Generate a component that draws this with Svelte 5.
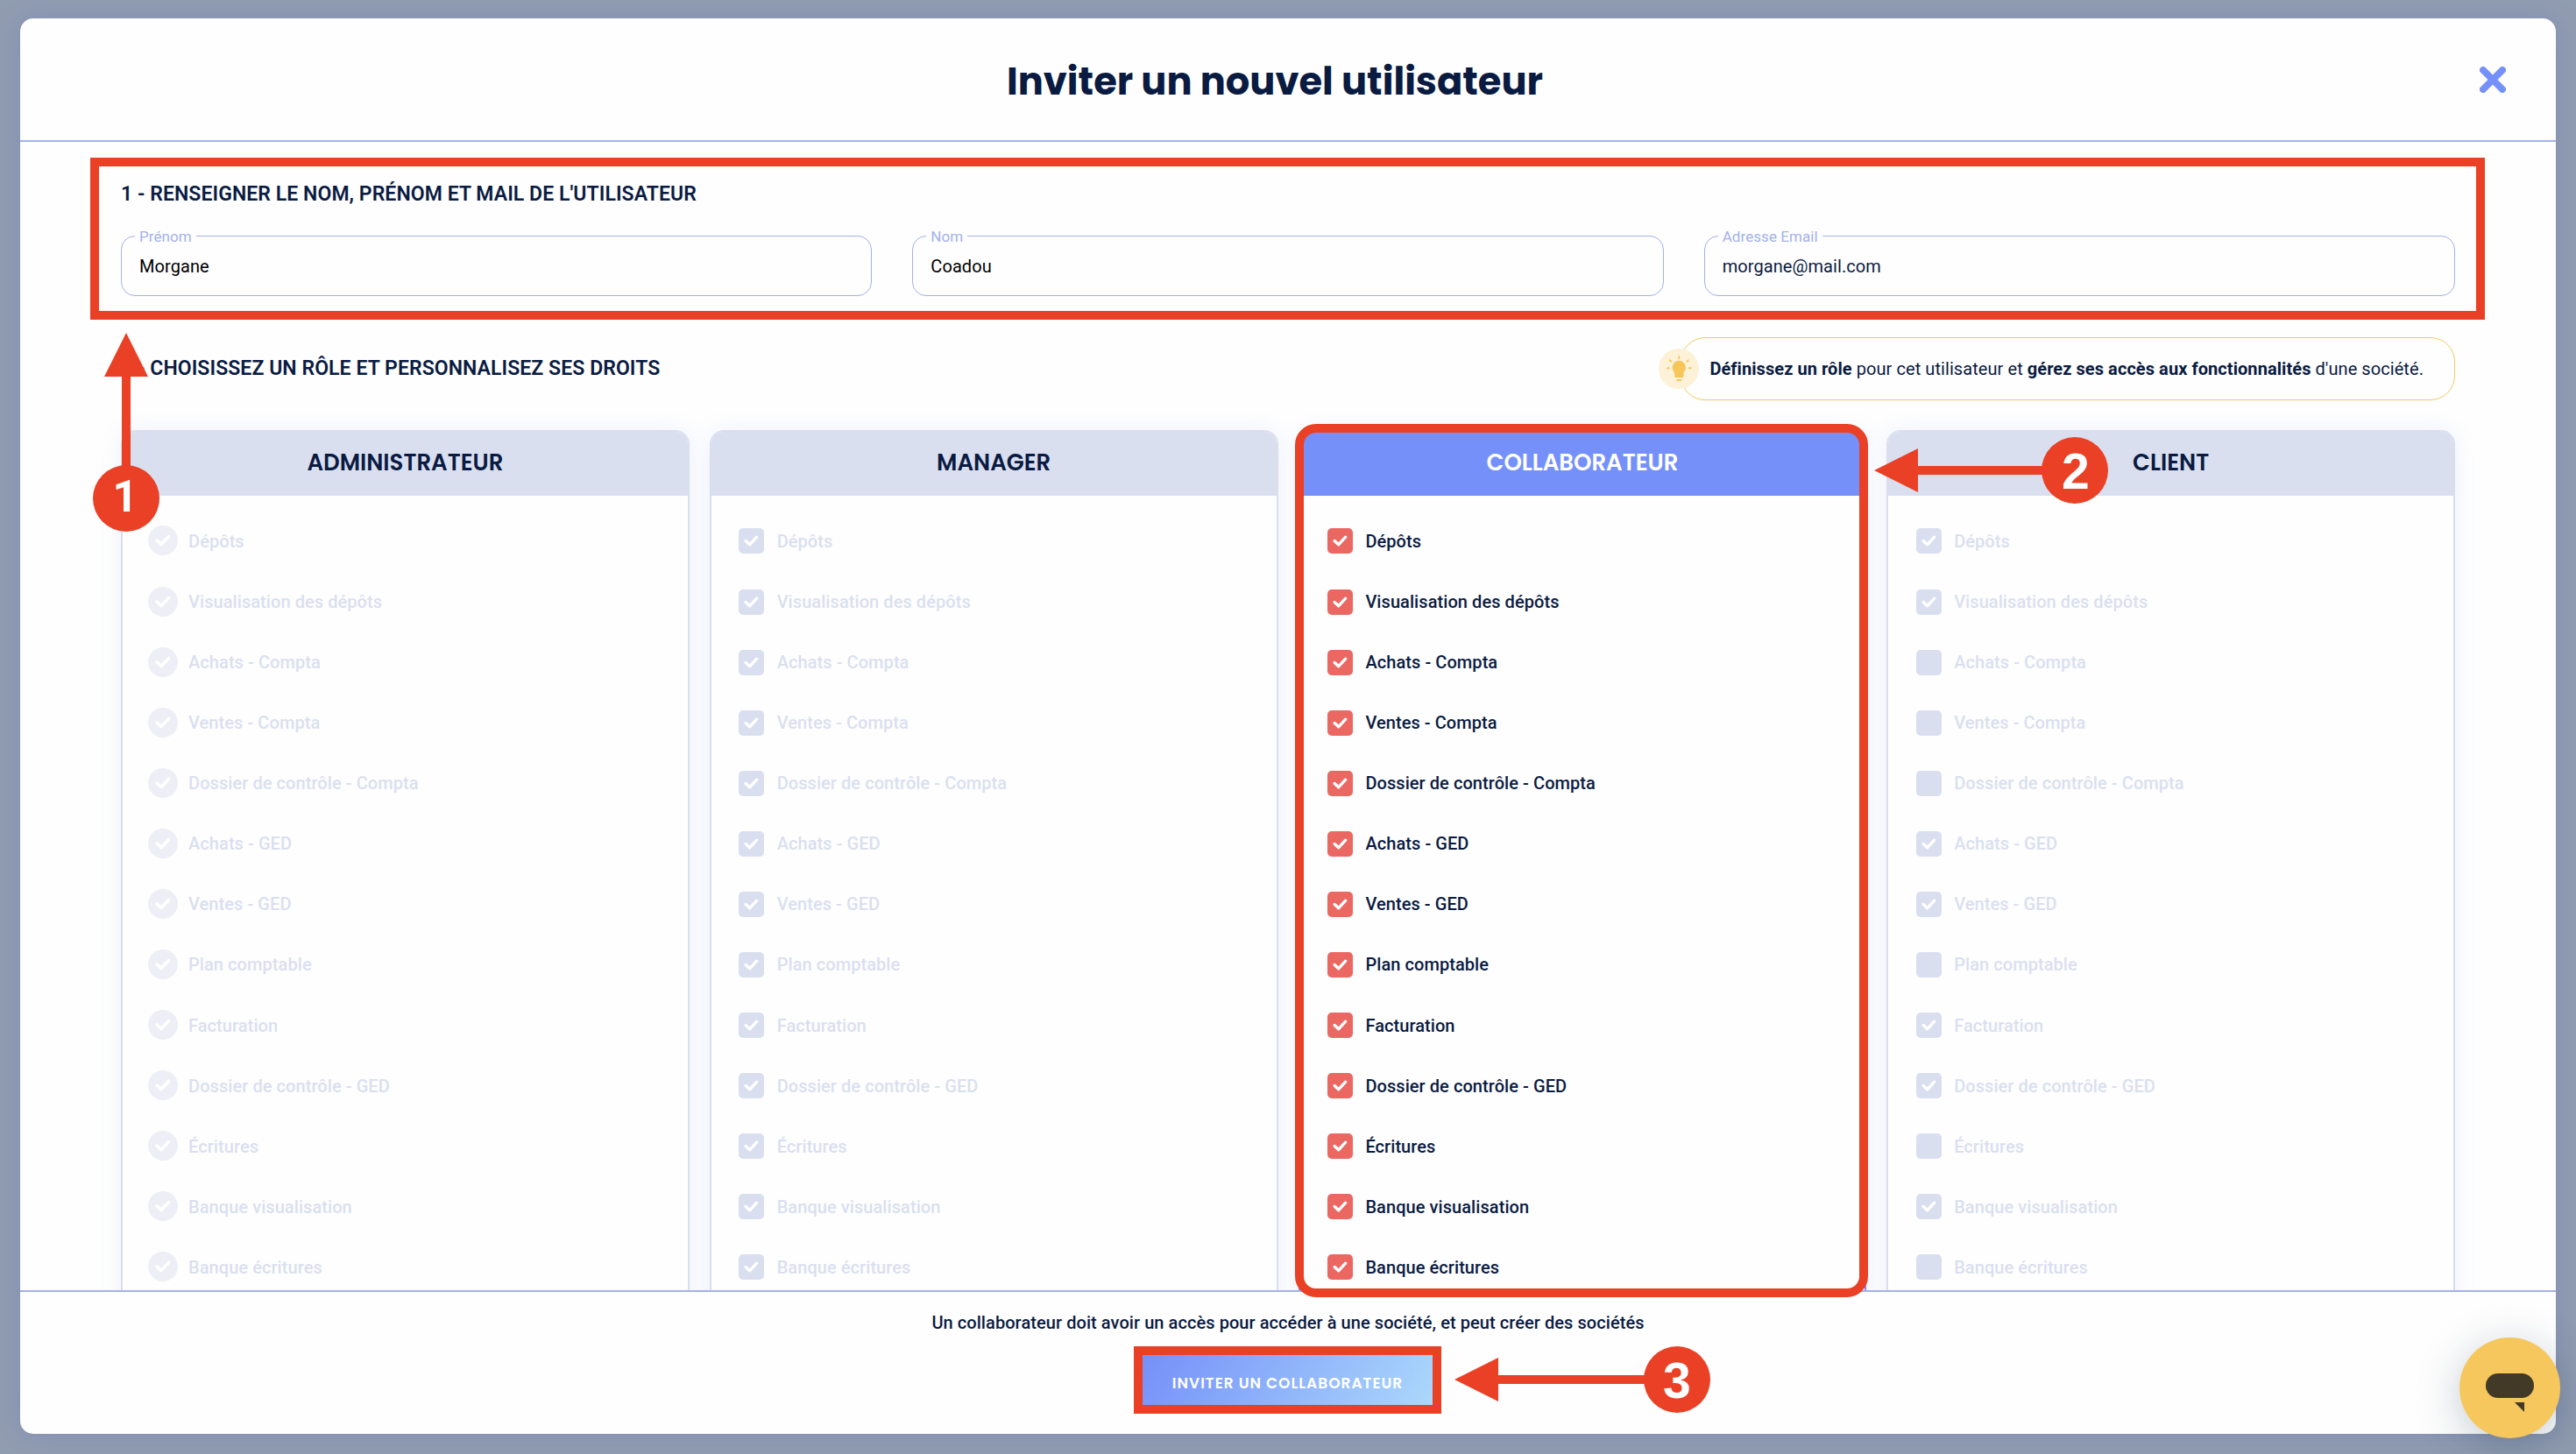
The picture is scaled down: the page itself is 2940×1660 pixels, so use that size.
<script lang="ts">
	type Role = {
		name: string;
		kind: 'locked' | 'editable';
		active?: boolean;
		unchecked?: number[];
	};

	const rights = [
		'Dépôts',
		'Visualisation des dépôts',
		'Achats - Compta',
		'Ventes - Compta',
		'Dossier de contrôle - Compta',
		'Achats - GED',
		'Ventes - GED',
		'Plan comptable',
		'Facturation',
		'Dossier de contrôle - GED',
		'Écritures',
		'Banque visualisation',
		'Banque écritures'
	];

	const roles: Role[] = [
		{ name: 'Administrateur', kind: 'locked' },
		{ name: 'Manager', kind: 'editable' },
		{ name: 'Collaborateur', kind: 'editable', active: true },
		{ name: 'Client', kind: 'editable', unchecked: [2, 3, 4, 7, 10, 12] }
	];

	const fields = [
		{ label: 'Prénom', value: 'Morgane' },
		{ label: 'Nom', value: 'Coadou' },
		{ label: 'Adresse Email', value: 'morgane@mail.com', navy: true }
	];
</script>

<div class="page">
	<div class="modal">
		<header class="header">
			<h1>Inviter un nouvel utilisateur</h1>
			<button class="close" aria-label="Fermer">
				<svg viewBox="0 0 30 30" width="30" height="30">
					<path d="M4 4 L26 26 M26 4 L4 26" />
				</svg>
			</button>
		</header>

		<main class="body">
			<h2>1 - Renseigner le nom, prénom et mail de l'utilisateur</h2>
			<div class="fields">
				{#each fields as field}
					<fieldset class="field">
						<legend>{field.label}</legend>
						<span class:navy={field.navy}>{field.value}</span>
					</fieldset>
				{/each}
			</div>

			<div class="roles-head">
				<h2>2 - Choisissez un rôle et personnalisez ses droits</h2>
				<div class="tip">
					<span class="bulb">
						<svg viewBox="0 0 46 46" width="46" height="46">
							<path
								class="glass"
								d="M23.3 13.7 a7.7 7.7 0 0 1 7.7 7.7 c0 3.5 -2.6 4.6 -2.6 7.6 v3 q0 1 -1 1 h-8.2 q-1 0 -1 -1 v-3 c0 -3 -2.6 -4.1 -2.6 -7.6 a7.7 7.7 0 0 1 7.7 -7.7z"
							/>
							<path
								class="rays"
								d="M21.2 36 h4.2 M23.3 9 v2 M12.8 13.2 l1.3 1.5 M33.8 13.2 l-1.3 1.5 M10 22.3 h1.8 M34.8 22.3 h1.8"
							/>
						</svg>
					</span>
					<p><b>Définissez un rôle</b> pour cet utilisateur et <b>gérez ses accès aux fonctionnalités</b> d'une société.</p>
				</div>
			</div>

			<div class="roles">
				{#each roles as role}
					<section class="role {role.kind}" class:active={role.active}>
						<h3>{role.name}</h3>
						<ul>
							{#each rights as right, i}
								<li>
									<span class="check">
										{#if !role.unchecked?.includes(i)}
											<svg viewBox="0 0 18 14">
												<path d="M2.2 7 L7 11.6 L15.6 2.4" />
											</svg>
										{/if}
									</span>
									{right}
								</li>
							{/each}
						</ul>
					</section>
				{/each}
			</div>
		</main>

		<footer class="footer">
			<p>Un collaborateur doit avoir un accès pour accéder à une société, et peut créer des sociétés</p>
			<button class="invite">Inviter un collaborateur</button>
		</footer>
	</div>

	<div class="mark mark-fields"></div>
	<div class="mark mark-role"></div>
	<svg class="arrows" viewBox="0 0 2940 1660" width="2940" height="1660">
		<path d="M144 380 L169 430 H149 V540 H139 V430 H119z" />
		<circle cx="144" cy="569" r="38" />
		<text class="one" x="143" y="584" font-size="50">1</text>
		<path d="M2139 537 L2189 512 V532 H2340 V542 H2189 V562z" />
		<circle cx="2368" cy="537" r="38" />
		<text x="2369" y="558" font-size="57">2</text>
		<path d="M1660 1575 L1710 1550 V1570 H1880 V1580 H1710 V1600z" />
		<circle cx="1914" cy="1575" r="38" />
		<text x="1914" y="1596" font-size="57">3</text>
	</svg>

	<button class="chat" aria-label="Chat">
		<svg viewBox="0 0 115 115" width="115" height="115">
			<rect x="30" y="41" width="55" height="28" rx="14" />
			<path d="M63 74 H74 V85z" />
		</svg>
	</button>
</div>

<style>
	:global(body) {
		margin: 0;
		overflow: hidden;
	}

	.page {
		--navy: #0a1b42;
		--red: #ea4025;
		--blue: #7590f9;
		--line: #a3b1ec;
		--pale: #dadff0;
		position: relative;
		box-sizing: border-box;
		width: 2940px;
		height: 1660px;
		padding: 21px 23px 23px;
		overflow: hidden;
		background: #919db0;
		color: var(--navy);
		font-family: Roboto, sans-serif;
		letter-spacing: 0.07px;
	}

	h1,
	h2,
	h3,
	p,
	ul {
		margin: 0;
		padding: 0;
	}

	button {
		border: none;
		padding: 0;
		background: none;
		cursor: pointer;
	}

	.modal {
		display: flex;
		flex-direction: column;
		height: 1616px;
		border-radius: 15px;
		background: #fefefe;
		box-shadow: 0 0 32px rgba(117, 130, 190, 0.5);
		overflow: hidden;
	}

	.header {
		display: flex;
		flex: none;
		align-items: center;
		box-sizing: border-box;
		height: 141px;
		padding: 0 57px;
		border-bottom: 2px solid var(--line);
	}

	h1 {
		flex: 1;
		padding-top: 4px;
		text-align: center;
		font: 700 43.2px/60px Poppins, sans-serif;
		letter-spacing: 0;
	}

	.close {
		display: flex;
	}

	.close path {
		fill: none;
		stroke: var(--blue);
		stroke-width: 8;
		stroke-linecap: round;
	}

	.body {
		flex: 1;
		min-height: 0;
		padding: 43px 115px 0;
		overflow: hidden;
	}

	h2 {
		font-size: 23px;
		font-weight: 600;
		line-height: 34px;
		text-transform: uppercase;
	}

	.fields {
		display: grid;
		grid-template-columns: repeat(3, 1fr);
		gap: 46px;
		margin-top: 21px;
	}

	.field {
		box-sizing: border-box;
		min-width: 0;
		height: 78px;
		margin: 0;
		padding: 0 20px;
		border: 1px solid var(--line);
		border-radius: 16px;
		font-size: 20px;
		line-height: 50px;
		color: #000;
	}

	.field .navy {
		color: var(--navy);
	}

	legend {
		margin-left: -5px;
		padding: 1px 5px 0;
		font-size: 17px;
		line-height: 18px;
		color: var(--line);
	}

	.roles-head {
		display: flex;
		align-items: center;
		justify-content: space-between;
		margin-top: 47px;
	}

	.tip {
		position: relative;
		box-sizing: border-box;
		height: 72px;
		padding: 0 35px 0 32px;
		border: 1px solid #f5c85c;
		border-radius: 28px;
		font-size: 20px;
		line-height: 70px;
		white-space: nowrap;
	}

	.bulb {
		position: absolute;
		left: -26px;
		top: 12px;
		width: 46px;
		height: 46px;
		border-radius: 50%;
		background: #fdf2d8;
	}

	.bulb svg {
		display: block;
	}

	.glass {
		fill: #f6c65b;
	}

	.rays {
		fill: none;
		stroke: #f6c65b;
		stroke-width: 2;
		stroke-linecap: round;
	}

	.roles {
		display: grid;
		grid-template-columns: repeat(4, 1fr);
		gap: 23px;
		margin-top: 34px;
	}

	.role {
		height: 1100px;
		box-sizing: border-box;
		border: 2px solid var(--pale);
		border-radius: 16px;
		box-shadow: 0 0 24px rgba(117, 144, 249, 0.12);
		color: var(--pale);
		overflow: hidden;
	}

	.role h3 {
		height: 73px;
		background: var(--pale);
		color: var(--navy);
		text-align: center;
		text-transform: uppercase;
		font: 600 26px/70px Poppins, sans-serif;
		letter-spacing: 0;
	}

	.role ul {
		padding: 17.4px 0 0 31.7px;
		list-style: none;
	}

	.role li {
		display: flex;
		align-items: center;
		gap: 14.2px;
		height: 69.08px;
		font-size: 20px;
		font-weight: 500;
	}

	.check {
		display: flex;
		align-items: center;
		justify-content: center;
		width: 29px;
		height: 29px;
		border-radius: 5px;
		background: var(--pale);
	}

	.check svg {
		width: 17px;
		height: 13px;
	}

	.check path {
		fill: none;
		stroke: #fff;
		stroke-width: 3.6;
		stroke-linecap: round;
		stroke-linejoin: round;
	}

	.locked ul {
		padding-left: 29px;
	}

	.locked li {
		gap: 12px;
	}

	.locked .check {
		width: 34px;
		height: 34px;
		margin-top: -1px;
		border-radius: 50%;
		background: #eeeff6;
	}

	.locked .check svg {
		width: 18px;
		height: 14px;
	}

	.active {
		border-color: var(--blue);
		color: var(--navy);
	}

	.active h3 {
		background: var(--blue);
		color: #fff;
	}

	.active .check {
		background: #eb6762;
	}

	.footer {
		display: flex;
		flex: none;
		flex-direction: column;
		align-items: center;
		box-sizing: border-box;
		height: 164px;
		padding-top: 20px;
		border-top: 2px solid var(--line);
	}

	.footer p {
		font-size: 20px;
		font-weight: 500;
		line-height: 30px;
	}

	.invite {
		box-sizing: border-box;
		width: 351px;
		height: 77px;
		margin: 12px 1px 0 0;
		padding-top: 6px;
		border: 10px solid var(--red);
		background: linear-gradient(120deg, var(--blue), #abd8fb) padding-box;
		color: #fff;
		font: 600 17px/20px Poppins, sans-serif;
		letter-spacing: 1px;
		text-transform: uppercase;
	}

	.mark {
		position: absolute;
		box-sizing: border-box;
		border: 10px solid var(--red);
	}

	.mark-fields {
		left: 103px;
		top: 180px;
		width: 2733px;
		height: 185px;
	}

	.mark-role {
		left: 1478px;
		top: 484px;
		width: 654px;
		height: 997px;
		border-radius: 24px;
	}

	.arrows {
		position: absolute;
		left: 0;
		top: 0;
		fill: var(--red);
		pointer-events: none;
	}

	.arrows text {
		fill: #fff;
		font-family: 'Liberation Sans', sans-serif;
		font-weight: 700;
		text-anchor: middle;
	}

	.arrows .one {
		font-family: Roboto, sans-serif;
	}

	.chat {
		position: absolute;
		left: 2807px;
		top: 1527px;
		width: 115px;
		height: 115px;
		border-radius: 50%;
		background: #f6c75c;
		box-shadow: 0 10px 50px rgba(20, 50, 70, 0.25);
	}

	.chat svg {
		display: block;
		fill: #423926;
	}
</style>
